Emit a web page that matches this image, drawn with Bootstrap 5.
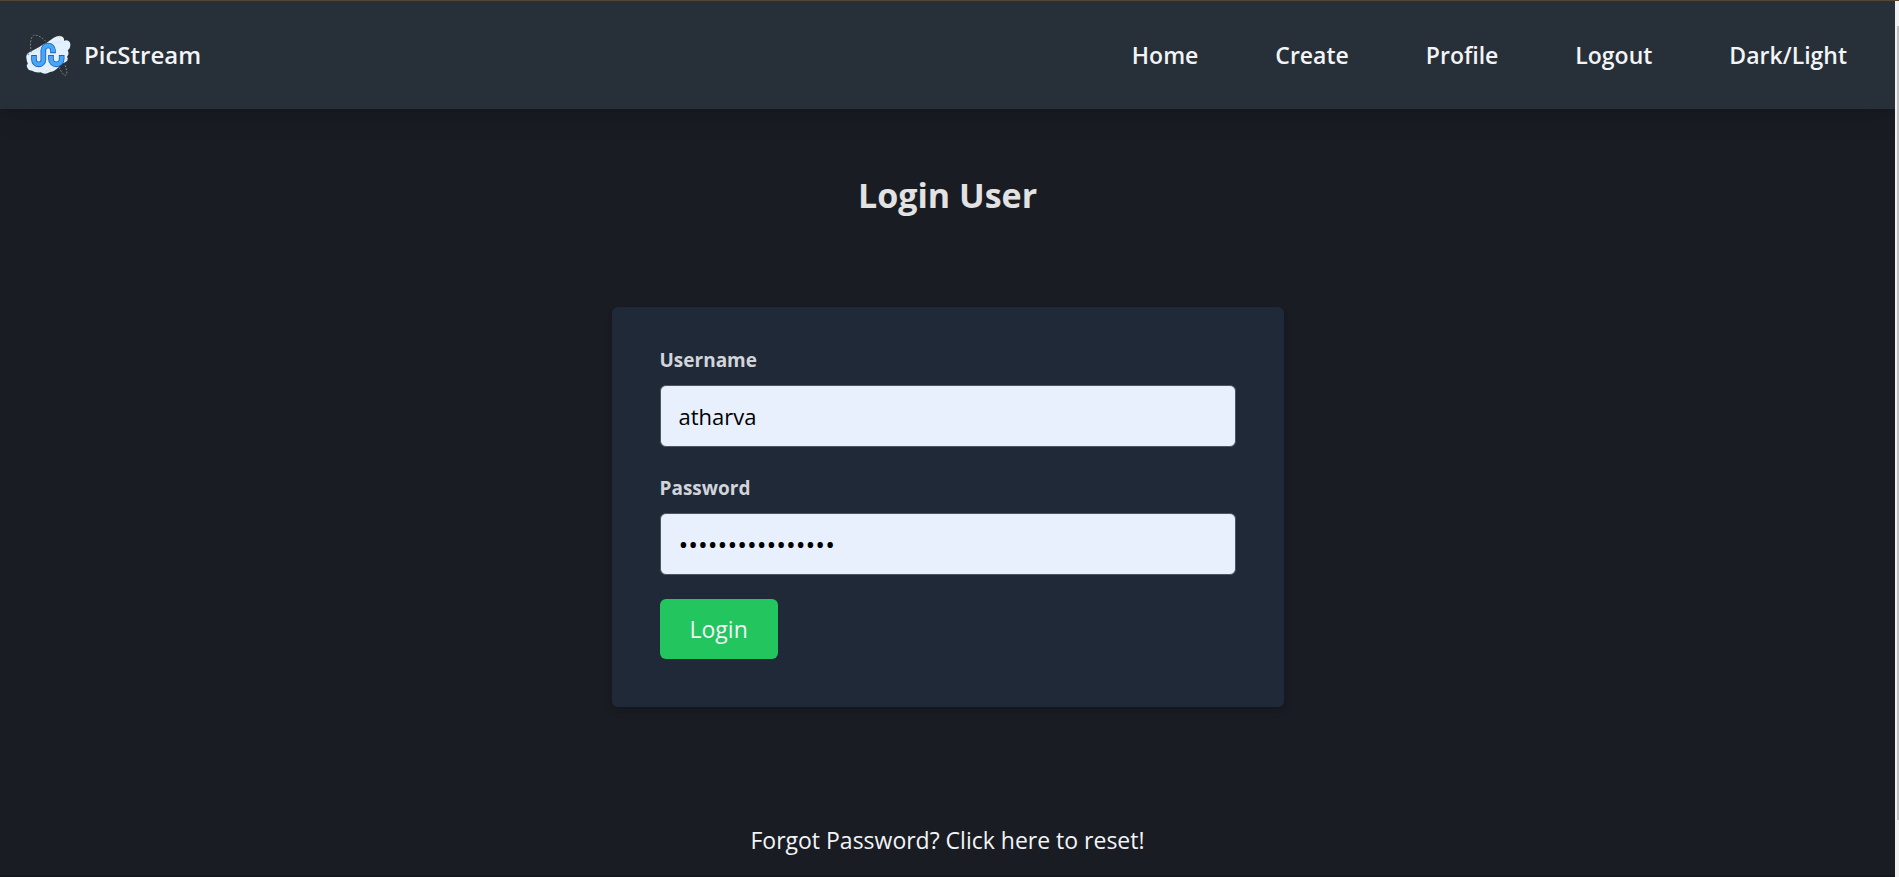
<!DOCTYPE html>
<html lang="en">
<head>
<meta charset="utf-8">
<meta name="viewport" content="width=device-width, initial-scale=1">
<title>PicStream</title>
<link rel="stylesheet" href="https://cdn.jsdelivr.net/npm/bootstrap@5.3.0/dist/css/bootstrap.min.css">
<style>
  body {
    background: #191c23;
    color: #f3f4f6;
    font-family: "Open Sans", "Noto Sans", sans-serif;
    font-size: 23px;
    line-height: 36px;
  }
  .app-shell { border-top: 1px solid #574631; }
  .top-bar {
    background: #272f38;
    padding: 30px 24px;
    box-shadow: 0 15px 23px -5px rgba(0, 0, 0, .1), 0 6px 9px -4px rgba(0, 0, 0, .1);
  }
  .brand-link { gap: 12px; font-size: 24px; font-weight: 600; color: #f3f4f6; }
  .brand-link svg { width: 48px; height: 48px; }
  .menu-links { column-gap: 77px; padding-right: 24px; }
  .menu-links .nav-link { font-weight: 600; color: #f3f4f6; }
  .page-title { font-size: 34px; font-weight: 700; line-height: 48px; color: #e2e2e2; margin: 62px 0 88px; }
  .login-card {
    width: 672px;
    background: #202937;
    border-radius: 6px;
    padding: 36px 48px 48px;
    box-shadow: 0 6px 9px -1px rgba(0, 0, 0, .1), 0 3px 6px -2px rgba(0, 0, 0, .1);
  }
  .field { margin-bottom: 24px; }
  .field label { font-size: 19px; font-weight: 700; line-height: 34px; color: #d1d5db; margin-bottom: 8px; }
  .field .form-control, .field .form-control:focus {
    height: 62px;
    padding: 12px 18px;
    font-size: 22px;
    color: #000;
    background: #e8f0fe;
    border: 1px solid #4b5563;
    border-radius: 6px;
  }
  .field .form-control[type="password"] { font-size: 26px; }
  .login-btn, .login-btn:hover {
    height: 60px;
    padding: 12px 30px;
    font-size: 23px;
    line-height: 36px;
    color: #f3f4f6;
    background: #22c55e;
    border: 0;
    border-radius: 6px;
  }
  .reset-link { color: #f3f4f6; margin: 115px 0 17px; }
  .page-end { height: 2px; background: #15171d; }
  .scroll-track { width: 4px; background: #f1f1f1; padding: 25px 0 57px 2px; }
  .scroll-thumb { background: #c1c1c1; }
</style>
</head>
<body>
<div class="app-shell d-flex min-vh-100">
  <div class="d-flex flex-column flex-grow-1">
    <nav class="top-bar d-flex align-items-center justify-content-between">
      <a class="brand-link d-flex align-items-center text-decoration-none" href="#">
        <svg viewBox="0 0 144 144" aria-hidden="true">
          <path d="M7 80Q5 69 18 63L46 48Q58 39 67 36L88 21Q100 13 112 16Q122 20 120 29Q136 25 139 39Q140 52 131 58Q137 69 129 77Q137 88 119 96Q108 98 104 107Q95 120 78 123Q63 133 50 124Q34 126 24 119Q9 119 8 102Q14 99 9 92Z" fill="#e3f1fe"/>
          <g fill="none" stroke-width="3" stroke-dasharray="6 4">
            <path d="M22 64C18 44 18 19 29 13C40 10 55 20 66 32M104 108C113 124 120 136 126 132C131 127 128 113 121 98" stroke="#7b7d70"/>
            <path d="M27 67C49 48 80 34 113 33M65 121C92 110 111 96 128 80" stroke="#b5dcf8" stroke-width="2"/>
          </g>
          <circle cx="107" cy="17" r="3" fill="#f6d77b"/>
          <circle cx="13" cy="70" r="3" fill="#55b8f4"/>
          <circle cx="127" cy="85" r="2" fill="#f6d77b"/>
          <g fill="none">
            <path d="M30 72V86A14 14 0 0 0 58 86V58A14 14 0 0 1 87 58V67M81 72V84A16 16 0 0 0 113 84V72" stroke="#245cc4" stroke-width="17"/>
            <path d="M30 75V86A14 14 0 0 0 58 86V58A14 14 0 0 1 87 58V64M81 75V84A16 16 0 0 0 113 84V75" stroke="#45a8f5" stroke-width="12"/>
          </g>
        </svg>
        <span>PicStream</span>
      </a>
      <div class="menu-links nav">
        <a class="nav-link p-0" href="#">Home</a>
        <a class="nav-link p-0" href="#">Create</a>
        <a class="nav-link p-0" href="#">Profile</a>
        <a class="nav-link p-0" href="#">Logout</a>
        <a class="nav-link p-0" href="#">Dark/Light</a>
      </div>
    </nav>
    <main class="d-flex flex-column align-items-center flex-grow-1">
      <h1 class="page-title">Login User</h1>
      <form class="login-card mw-100">
        <div class="field">
          <label class="d-block" for="username">Username</label>
          <input class="form-control" type="text" id="username" value="atharva">
        </div>
        <div class="field">
          <label class="d-block" for="password">Password</label>
          <input class="form-control" type="password" id="password" value="abcdefghijklmnop">
        </div>
        <button class="login-btn btn" type="button">Login</button>
      </form>
      <a class="reset-link text-decoration-none" href="#">Forgot Password? Click here to reset!</a>
    </main>
    <div class="page-end"></div>
  </div>
  <div class="scroll-track d-flex" aria-hidden="true"><div class="scroll-thumb flex-grow-1"></div></div>
</div>
<script src="https://cdn.jsdelivr.net/npm/bootstrap@5.3.0/dist/js/bootstrap.bundle.min.js"></script>
</body>
</html>
